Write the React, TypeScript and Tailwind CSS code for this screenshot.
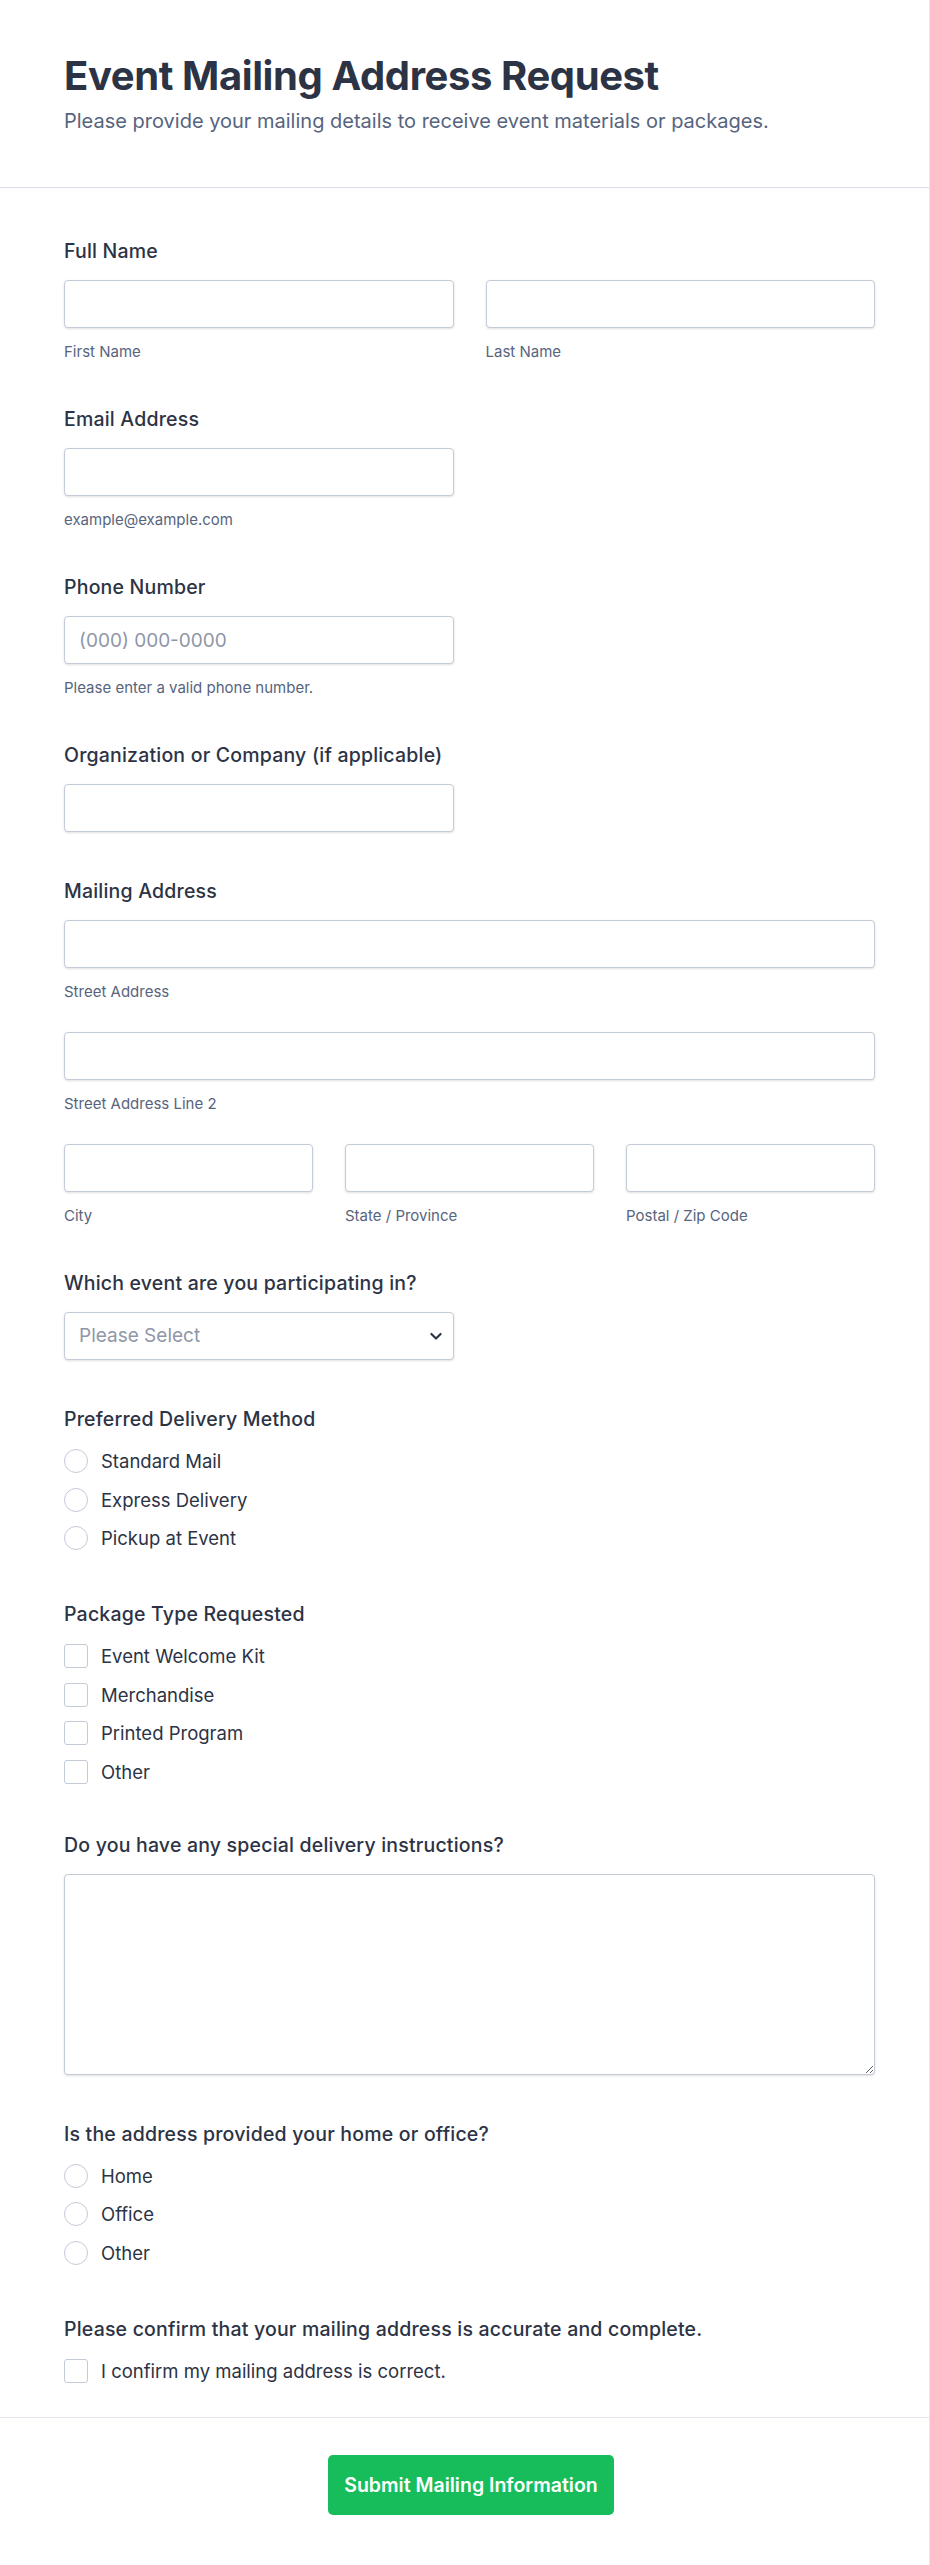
import React from 'react';

const labelCls = 'block text-[19.5px] font-medium leading-7 tracking-[0.01em] text-[#2c3345]';
const inputCls =
  'block h-12 w-full rounded-[4px] border border-[#c3cad8] bg-white px-3.5 text-[19px] text-[#2c3345] shadow-sm outline-none placeholder:text-[#8f96a8]';
const subCls = 'mt-4 block text-[15px] leading-4 text-[#57647e]';

function Field({ label, children }: { label: string; children: React.ReactNode }) {
  return (
    <div>
      <label className={`${labelCls} mb-[15px]`}>{label}</label>
      {children}
    </div>
  );
}

function Options({ label, items, kind }: { label: string; items: string[]; kind: 'radio' | 'check' }) {
  return (
    <div className={kind === 'radio' ? 'pb-[3px]' : ''}>
      <div className={`${labelCls} mb-[14px]`}>{label}</div>
      <div className="flex flex-col gap-[10.5px]">
        {items.map((item) => (
          <label key={item} className="flex h-7 items-center gap-[13px]">
            <span
              className={`h-6 w-6 shrink-0 border border-[#c3cad8] bg-white ${
                kind === 'radio' ? 'rounded-full' : 'rounded-[3px]'
              }`}
            />
            <span className="text-[18.5px] leading-7 text-[#2c3345]">{item}</span>
          </label>
        ))}
      </div>
    </div>
  );
}

export default function App() {
  return (
    <div className="min-h-screen bg-white font-['Inter',sans-serif]">
      <div className="border-r border-[#e6e6ef]">
        <header className="border-b border-[#dedee8] pb-[52px] pl-16 pr-[54px] pt-[52px]">
          <h1 className="text-[40px] font-bold leading-[48px] tracking-[-0.01em] text-[#2c3345]">
            Event Mailing Address Request
          </h1>
          <p className="mt-[7px] text-[20px] leading-7 text-[#57647e]">
            Please provide your mailing details to receive event materials or packages.
          </p>
        </header>

        <form className="flex flex-col gap-[45px] pb-[32px] pl-16 pr-[54px] pt-[49px]">
          <Field label="Full Name">
            <div className="grid grid-cols-2 gap-8">
              <div>
                <input className={inputCls} />
                <span className={subCls}>First Name</span>
              </div>
              <div>
                <input className={inputCls} />
                <span className={subCls}>Last Name</span>
              </div>
            </div>
          </Field>

          <Field label="Email Address">
            <div className="grid grid-cols-2 gap-8">
              <div>
                <input className={inputCls} />
                <span className={subCls}>example@example.com</span>
              </div>
            </div>
          </Field>

          <Field label="Phone Number">
            <div className="grid grid-cols-2 gap-8">
              <div>
                <input className={inputCls} placeholder="(000) 000-0000" />
                <span className={subCls}>Please enter a valid phone number.</span>
              </div>
            </div>
          </Field>

          <Field label="Organization or Company (if applicable)">
            <div className="grid grid-cols-2 gap-8">
              <input className={inputCls} />
            </div>
          </Field>

          <Field label="Mailing Address">
            <div className="flex flex-col gap-8">
              <div>
                <input className={inputCls} />
                <span className={subCls}>Street Address</span>
              </div>
              <div>
                <input className={inputCls} />
                <span className={subCls}>Street Address Line 2</span>
              </div>
              <div className="grid grid-cols-3 gap-8">
                <div>
                  <input className={inputCls} />
                  <span className={subCls}>City</span>
                </div>
                <div>
                  <input className={inputCls} />
                  <span className={subCls}>State / Province</span>
                </div>
                <div>
                  <input className={inputCls} />
                  <span className={subCls}>Postal / Zip Code</span>
                </div>
              </div>
            </div>
          </Field>

          <Field label="Which event are you participating in?">
            <div className="grid grid-cols-2 gap-8">
              <div className="relative">
                <div className={`${inputCls} flex items-center text-[#8f96a8]`}>Please Select</div>
                <svg
                  className="absolute right-[8px] top-1/2 h-5 w-5 -translate-y-1/2 text-[#2c3345]"
                  viewBox="0 0 24 24"
                  fill="none"
                  stroke="currentColor"
                  strokeWidth="2.6"
                  strokeLinecap="round"
                  strokeLinejoin="round"
                >
                  <path d="M6.5 9.5l5.5 5.5 5.5-5.5" />
                </svg>
              </div>
            </div>
          </Field>

          <Options
            label="Preferred Delivery Method"
            kind="radio"
            items={['Standard Mail', 'Express Delivery', 'Pickup at Event']}
          />

          <Options
            label="Package Type Requested"
            kind="check"
            items={['Event Welcome Kit', 'Merchandise', 'Printed Program', 'Other']}
          />

          <Field label="Do you have any special delivery instructions?">
            <textarea className="block h-[201px] w-full rounded-[4px] border border-[#c3cad8] bg-white px-3.5 py-2.5 text-lg shadow-sm outline-none" />
          </Field>

          <Options label="Is the address provided your home or office?" kind="radio" items={['Home', 'Office', 'Other']} />

          <Options
            label="Please confirm that your mailing address is accurate and complete."
            kind="check"
            items={['I confirm my mailing address is correct.']}
          />
        </form>

        <footer className="flex justify-center border-t border-[#e6e6ef] pb-[50px] pl-[67px] pr-[54px] pt-[37px]">
          <button
            type="button"
            className="rounded-[5px] bg-[#18bd5b] px-4 py-4 text-[19.5px] font-semibold leading-7 text-white"
          >
            Submit Mailing Information
          </button>
        </footer>
      </div>
    </div>
  );
}
